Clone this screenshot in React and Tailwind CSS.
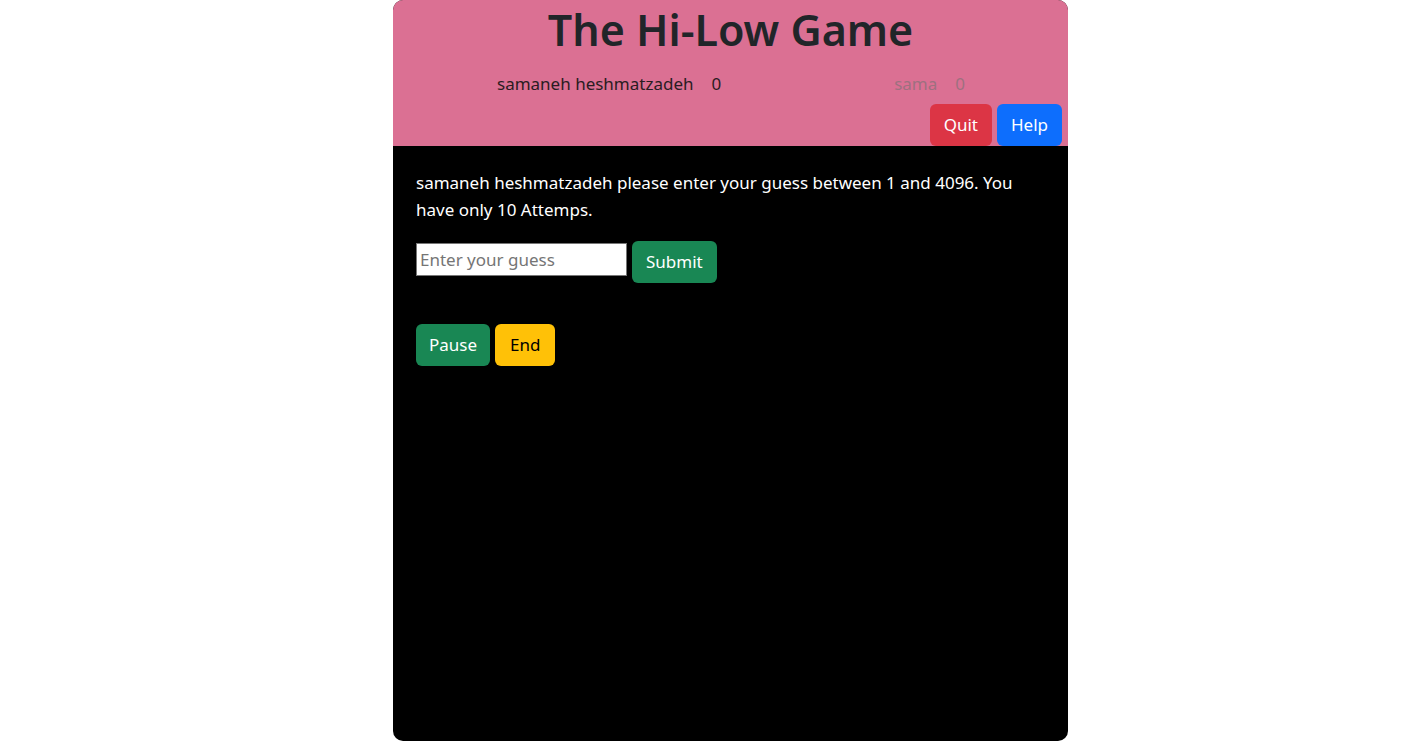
import { useState } from 'react';

const players = [
  { name: 'samaneh heshmatzadeh', score: 0, active: true },
  { name: 'sama', score: 0, active: false }
];

const App = () => {
  const [guess, setGuess] = useState('');

  return (
    <div className="w-full min-h-[745px] bg-white" style={{ fontFamily: '"Noto Sans", "Open Sans", sans-serif' }}>
      <div className="ml-[393px] w-[675px] h-[741px] rounded-[10px] overflow-hidden bg-black flex flex-col">
        {/* Header */}
        <div className="h-[146px] bg-[#db7093] flex flex-col">
          <h1 className="text-center text-[43px] leading-[60px] font-semibold text-[#212529]">
            The Hi-Low Game
          </h1>
          <div className="flex justify-between pl-[104px] pr-[103px] mt-[11px] text-[17px] leading-[26px]">
            {players.map((p) => (
              <div
                key={p.name}
                className={`flex gap-[18px] ${p.active ? 'text-[#2a1c22]' : 'text-[#9e7080]'}`}
              >
                <span>{p.name}</span>
                <span>{p.score}</span>
              </div>
            ))}
          </div>
          <div className="flex justify-end gap-[5px] pr-[6px] mt-auto">
            <button className="h-[42px] px-[14px] rounded-[6px] bg-[#dc3545] text-white text-[17px]">Quit</button>
            <button className="h-[42px] px-[14px] rounded-[6px] bg-[#0d6efd] text-white text-[17px]">Help</button>
          </div>
        </div>

        {/* Body */}
        <div className="px-[23px] pt-[23px] text-white text-[17px]">
          <p className="leading-[27px] mb-[18px]">
            samaneh heshmatzadeh please enter your guess between 1 and 4096. You have only 10 Attemps.
          </p>
          <div className="flex items-start gap-[5px]">
            <input
              type="text"
              value={guess}
              onChange={(e) => setGuess(e.target.value)}
              placeholder="Enter your guess"
              className="mt-[2px] w-[211px] h-[33px] px-[3px] bg-white text-black border border-[#767676] text-[17px] placeholder:text-[#757575] outline-none"
            />
            <button className="h-[42px] px-[14px] rounded-[6px] bg-[#198754] text-white">Submit</button>
          </div>
          <div className="flex gap-[5px] mt-[41px]">
            <button className="h-[42px] px-[13px] rounded-[6px] bg-[#198754] text-white">Pause</button>
            <button className="h-[42px] px-[15px] rounded-[6px] bg-[#ffc107] text-black">End</button>
          </div>
        </div>
      </div>
    </div>
  );
};

export default App;
